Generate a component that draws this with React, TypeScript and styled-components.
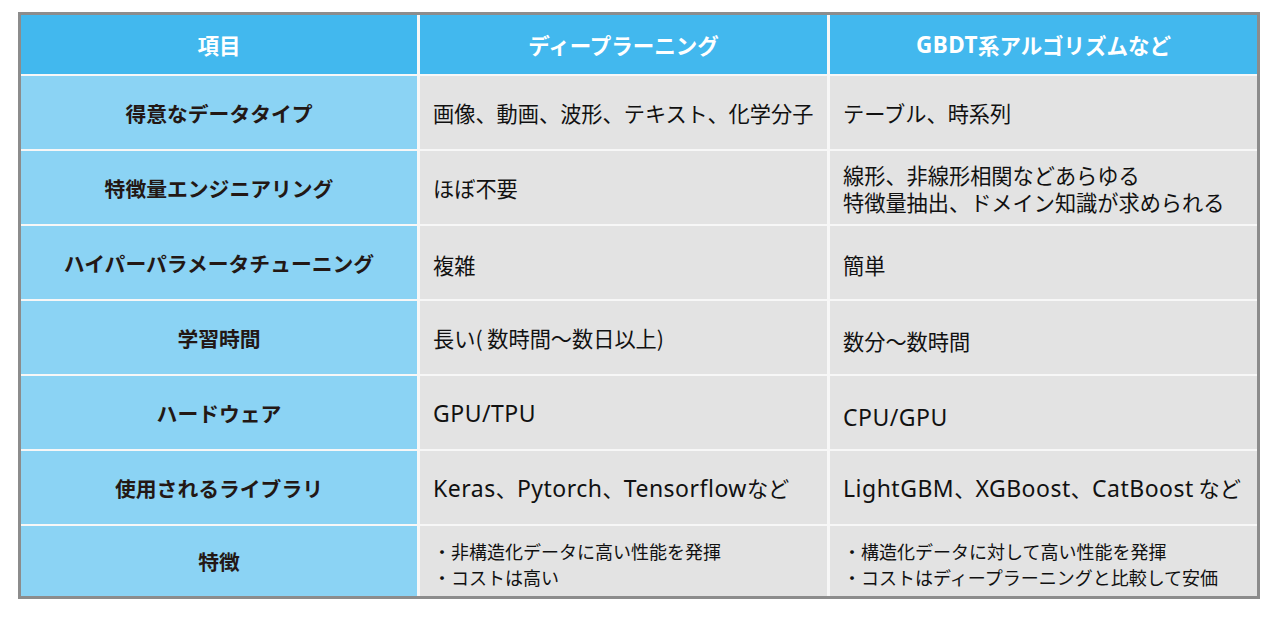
import { Fragment } from 'react';
import styled, { createGlobalStyle } from 'styled-components';

const GlobalStyle = createGlobalStyle`
  html, body {
    margin: 0;
    padding: 0;
    background: #ffffff;
  }
  body {
    font-family: "Noto Sans CJK JP", sans-serif;
    color: #1a1a1a;
  }
`;

const Page = styled.div`
  padding: 12px 0 0 18px;
`;

const Table = styled.div`
  width: 1236px;
  height: 581px;
  border: 3px solid #8c8c8c;
  background: #f7f7f7;
  display: grid;
  grid-template-columns: 396px 407px 427px;
  grid-template-rows: 59px repeat(6, 73px) 1fr;
  column-gap: 3px;
  row-gap: 2px;
`;

const HeadCell = styled.div`
  background: #42b8ee;
  color: #ffffff;
  font-family: "Noto Sans CJK JP", sans-serif;
  font-weight: 700;
  font-size: 21.5px;
  display: flex;
  align-items: center;
  justify-content: center;
`;

const LabelCell = styled.div`
  background: #8bd3f4;
  color: #231815;
  font-family: "Noto Sans CJK JP", sans-serif;
  font-weight: 700;
  font-size: 20.8px;
  display: flex;
  align-items: center;
  justify-content: center;
`;

const Cell = styled.div<{ $small?: boolean; $shift?: number }>`
  background: #e3e3e3;
  color: #111111;
  font-size: ${(p) => (p.$small ? '18px' : '21.2px')};
  line-height: ${(p) => (p.$small ? '26px' : '27px')};
  padding: ${(p) => p.$shift ?? 0}px 13px 0 13px;
  display: flex;
  flex-direction: column;
  justify-content: center;
  white-space: nowrap;
`;

// Latin runs are set a little larger, as the original's font draws them wide
const Latin = styled.span<{ $bold?: boolean }>`
  font-family: "Noto Sans", "Open Sans", sans-serif;
  font-size: ${(p) => (p.$bold ? '22.5px' : '23px')};
  letter-spacing: 0.5px;
`;

function Mixed({ text, bold }: { text: string; bold?: boolean }) {
  const parts = text.split(/([A-Za-z/]+)/).filter(Boolean);
  return (
    <>
      {parts.map((part, i) =>
        /^[A-Za-z/]+$/.test(part) ? (
          <Latin key={i} $bold={bold}>
            {part}
          </Latin>
        ) : (
          <Fragment key={i}>{part}</Fragment>
        ),
      )}
    </>
  );
}

type Row = {
  label: string;
  dl: string[];
  gb: string[];
  small?: boolean;
  shiftDl?: number;
  shiftGb?: number;
};

const rows: Row[] = [
  { label: '得意なデータタイプ', dl: ['画像、動画、波形、テキスト、化学分子'], gb: ['テーブル、時系列'] },
  {
    label: '特徴量エンジニアリング',
    dl: ['ほぼ不要'],
    gb: ['線形、非線形相関などあらゆる', '特徴量抽出、ドメイン知識が求められる'],
  },
  { label: 'ハイパーパラメータチューニング', dl: ['複雑'], gb: ['簡単'], shiftDl: 4, shiftGb: 4 },
  { label: '学習時間', dl: ['長い( 数時間～数日以上)'], gb: ['数分～数時間'], shiftGb: 6 },
  { label: 'ハードウェア', dl: ['GPU/TPU'], gb: ['CPU/GPU'], shiftGb: 8 },
  { label: '使用されるライブラリ', dl: ['Keras、Pytorch、Tensorflowなど'], gb: ['LightGBM、XGBoost、CatBoost など'] },
  {
    label: '特徴',
    dl: ['・非構造化データに高い性能を発揮', '・コストは高い'],
    gb: ['・構造化データに対して高い性能を発揮', '・コストはディープラーニングと比較して安価'],
    small: true,
    shiftDl: 6,
    shiftGb: 6,
  },
];

export default function App() {
  return (
    <Page>
      <GlobalStyle />
      <Table>
        <HeadCell>項目</HeadCell>
        <HeadCell>ディープラーニング</HeadCell>
        <HeadCell>
          <Mixed text="GBDT系アルゴリズムなど" bold />
        </HeadCell>
        {rows.map((r) => (
          <Fragment key={r.label}>
            <LabelCell>{r.label}</LabelCell>
            <Cell $small={r.small} $shift={r.shiftDl}>
              {r.dl.map((t) => (
                <span key={t}>{r.small ? t : <Mixed text={t} />}</span>
              ))}
            </Cell>
            <Cell $small={r.small} $shift={r.shiftGb}>
              {r.gb.map((t) => (
                <span key={t}>{r.small ? t : <Mixed text={t} />}</span>
              ))}
            </Cell>
          </Fragment>
        ))}
      </Table>
    </Page>
  );
}
